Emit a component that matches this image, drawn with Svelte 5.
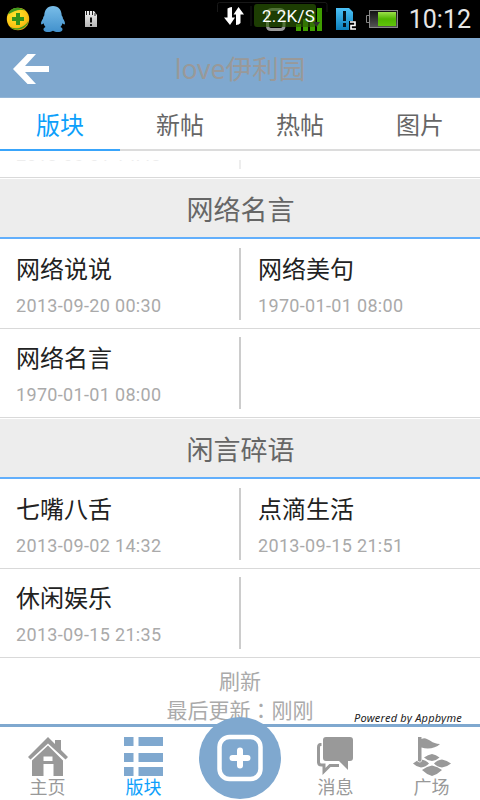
<script>
    const tabs = ["版块", "新帖", "热帖", "图片"];

    const sections = [
        {
            title: "网络名言",
            rows: [
                [
                    { name: "网络说说", date: "2013-09-20 00:30" },
                    { name: "网络美句", date: "1970-01-01 08:00" },
                ],
                [{ name: "网络名言", date: "1970-01-01 08:00" }],
            ],
        },
        {
            title: "闲言碎语",
            rows: [
                [
                    { name: "七嘴八舌", date: "2013-09-02 14:32" },
                    { name: "点滴生活", date: "2013-09-15 21:51" },
                ],
                [{ name: "休闲娱乐", date: "2013-09-15 21:35" }],
            ],
        },
    ];

    let active = $state(0);
</script>

<div class="screen">
    <div class="status">
        <svg class="status-icons" width="480" height="38" viewBox="0 0 480 38">
            <defs>
                <radialGradient id="ball" cx=".4" cy=".35" r=".75">
                    <stop offset="0" stop-color="#ffe62e" />
                    <stop offset=".65" stop-color="#fbc414" />
                    <stop offset="1" stop-color="#e79a09" />
                </radialGradient>
                <linearGradient id="qq" x2="0" y2="1">
                    <stop offset="0" stop-color="#79bde8" />
                    <stop offset="1" stop-color="#4291cc" />
                </linearGradient>
                <linearGradient id="card" x2="0" y2="1">
                    <stop offset="0" stop-color="#f2f2f2" />
                    <stop offset="1" stop-color="#b5b5b5" />
                </linearGradient>
                <linearGradient id="sim" x2="0" y2="1">
                    <stop offset="0" stop-color="#4cc2f8" />
                    <stop offset="1" stop-color="#0c80bc" />
                </linearGradient>
                <linearGradient id="charge" x2="0" y2="1">
                    <stop offset="0" stop-color="#9be04a" />
                    <stop offset=".5" stop-color="#4fb500" />
                    <stop offset="1" stop-color="#60c40a" />
                </linearGradient>
                <linearGradient id="empty" x2="0" y2="1">
                    <stop offset="0" stop-color="#111" />
                    <stop offset="1" stop-color="#555" />
                </linearGradient>
            </defs>

            <circle cx="18" cy="19" r="11.2" fill="url(#ball)" />
            <path d="M8 14.500C10 8 18 5 25 10.500c-7-2-11 1-17 4zM10 27c6 3 14 1 18.500-6-1 7-12 12-18.500 6z" fill="#3f9a1f" />
            <path d="M16 13h4v4h4v4h-4v4h-4v-4h-4v-4h4z" fill="#36931a" />

            <path d="M53 6c-5.600 0-8.600 4-8.700 9.500-.8 1-1.300 2-1.200 3-1.500 2-2.300 4-2 5.500.2.800 1.500.5 2.400-.7.300 1.500 1 2.700 2 3.700-2 .8-2.400 2.100-1.700 3.500 1.500 2 6.700 2 9.200.3 2.500 1.700 7.700 1.700 9.200-.3.700-1.400.3-2.700-1.700-3.500 1-1 1.700-2.200 2-3.700.9 1.200 2.200 1.500 2.400.7.300-1.500-.5-3.500-2-5.500.1-1-.4-2-1.200-3C61.600 10 58.600 6 53 6z" fill="url(#qq)" />

            <path d="M85 11h9l3 4v12H85z" fill="url(#card)" />
            <path d="M86.500 11v4M89.500 11v4M92.500 11v4M95 13v3" stroke="#222" stroke-width="1" />
            <path d="M90 17.500h2v5h-2zM90 24h2v2h-2z" fill="#111" />

            <path d="M217.500 12V4.500q0-2 2-2H325q2 0 2 2V12M251 6v20" fill="none" stroke="#181818" />
            <path d="M227.500 8.500q2-1.500 4.500-1.500v10.500h3l-5 7.500-6-7.500h3.500zM236 25V14.500h-2.500L238.500 7l5.500 7.500h-3.500V23q-1.500 2-4.500 2z" fill="#fff" />

            <path d="M267.500 19v-5q0-4.500 4.500-4.500h8q4 0 4 4.500M267.500 20v6q0 3.500 3.500 3.500h9.500q3.500 0 3.500-3.500v-6" fill="none" stroke="#999" stroke-width="3" />
            <path d="M296 24h5v7h-5zM303 19h5v12h-5zM310 14h5v17h-5zM317 8h5v23h-5z" fill="#3f9d00" />
            <rect x="254" y="4" width="62" height="23" rx="3" fill="#2c5d04" fill-opacity=".65" />
            <path d="M313 22h7l-3.500 5z" fill="#303030" />

            <path d="M336 8h13l4 4v9h-4v9h-13z" fill="url(#sim)" />
            <path d="M343 11h3v10h-3zM343 23h3v4h-3z" fill="#06131b" />
            <path d="M350 22h5v3.500h-4v3.500h5" fill="none" stroke="#fff" stroke-width="1.600" />

            <path d="M369 15.500h-2.500v7h2.500" fill="none" stroke="#858585" />
            <rect x="369.500" y="10.500" width="28" height="17" fill="url(#empty)" stroke="#888" />
            <rect x="378" y="12" width="18" height="14" fill="url(#charge)" />
        </svg>
        <span class="speed">2.2K/S</span>
        <span class="clock">10:12</span>
    </div>

    <header>
        <svg class="back" width="36" height="30" viewBox="0 0 36 30">
            <path d="M0 15 14.500 0H23L12 12H36v6H12L23 30H14.500z" fill="#fff" />
        </svg>
        <h1>love伊利园</h1>
    </header>

    <nav class="tabs">
        {#each tabs as tab, i}
            <button class="tab" class:active={active === i} onclick={() => (active = i)}>{tab}</button>
        {/each}
    </nav>

    <main>
        <!-- last row of the section above, scrolled nearly out of view -->
        <div class="scrolled">
            <div class="row">
                <div class="cell"><span class="date">2013-06-01 14:43</span></div>
                <div class="cell"></div>
            </div>
        </div>

        {#each sections as section}
            <h2>{section.title}</h2>
            {#each section.rows as row}
                <div class="row">
                    {#each [0, 1] as i}
                        <div class="cell">
                            {#if row[i]}
                                <span class="name">{row[i].name}</span>
                                <span class="date">{row[i].date}</span>
                            {/if}
                        </div>
                    {/each}
                </div>
            {/each}
        {/each}

        <div class="refresh">
            <span>刷新</span>
            <span class="updated">最后更新：刚刚</span>
        </div>
        <span class="powered">Powered by Appbyme</span>
    </main>

    <footer>
        <div class="item">
            <svg width="40" height="40" viewBox="0 0 40 40" fill="#999">
                <path d="M0 20 20 0l7 7V3h6v10l7 7-2.500 2.500L20 6.500 2.500 22.500z" />
                <path d="M4 23.500 20 8.500 35 23.500V39h-9.500V27h-10v12H4z" />
                <path d="M15.500 19.500h9v4.500h-9z" fill="#fff" />
            </svg>
            <span>主页</span>
        </div>
        <div class="item current">
            <svg width="40" height="40" viewBox="0 0 40 40" fill="#7fa8cf">
                <path d="M0 0h9.500v9H0zM14.500 0H39v9H14.500zM0 16h9.500v9H0zM14.500 16H39v9H14.500zM0 30h9.500v9H0zM14.500 30H39v9H14.500z" />
            </svg>
            <span>版块</span>
        </div>
        <div class="item add">
            <svg width="82" height="82" viewBox="0 0 82 82">
                <circle cx="41" cy="41" r="41" fill="#7fa8cf" />
                <rect x="20.500" y="20" width="41" height="42" rx="10" fill="none" stroke="#fff" stroke-width="4.500" />
                <path d="M41 33.500v15M33.500 41h15" stroke="#fff" stroke-width="6" stroke-linecap="round" />
            </svg>
        </div>
        <div class="item">
            <svg width="40" height="40" viewBox="0 0 40 40" fill="#999">
                <path d="M10 0h24q3 0 3 3v18q0 3-3 3h-2v9l-9-9H10q-3 0-3-3V3q0-3 3-3z" />
                <path d="M5.500 7.500h-1q-2 0-2 3V25q0 3 3 3H8v6.500l6-6h9" fill="none" stroke="#999" stroke-width="3" />
            </svg>
            <span>消息</span>
        </div>
        <div class="item">
            <svg width="40" height="40" viewBox="0 0 40 40" fill="#999">
                <path d="M12 20.500Q16 17.500 20 17q4 .5 7.500 3.500-3 3-7.500 3.500-5-.5-8-3.500zM1 26.500Q5 23 9 22.500q5 .5 8 4-3 3.500-8 4-4.500-.5-8-4zM22 26.500q3-3.500 8-4 5 1 9 4-4 3.500-9 4-5-.5-8-4zM10 33q5-4 10-4.500 6 1 10 4.500-4 4-10 6-6-2-10-6z" />
                <path d="M6 0h3.500v2c6-3 9 5 18.500 5-4 4-12 6-18.500 3.500V23q-.5 3-3.500 1z" stroke="#fff" stroke-width="1.200" paint-order="stroke" />
            </svg>
            <span>广场</span>
        </div>
    </footer>
</div>

<style>
    :global(body) {
        background: #fff;
    }

    .screen {
        width: 480px;
        height: 800px;
        display: flex;
        flex-flow: column nowrap;
        overflow: hidden;
        font-family: Roboto, "Noto Sans CJK SC", sans-serif;
    }

    .status {
        position: relative;
        height: 38px;
        flex: none;
        background: #000;
        color: #fff;
    }

    .status-icons {
        display: block;
    }

    .speed {
        position: absolute;
        left: 262px;
        top: 5px;
        font-size: 17px;
        line-height: 22px;
        letter-spacing: 0.3px;
    }

    .clock {
        position: absolute;
        right: 9px;
        top: 5px;
        font-size: 25px;
        line-height: 30px;
        color: #e6e6e6;
    }

    header {
        position: relative;
        height: 60px;
        flex: none;
        box-sizing: border-box;
        border-bottom: 1px solid #93b5d6;
        background: #7fa8cf;
    }

    .back {
        position: absolute;
        left: 13px;
        top: 16px;
    }

    h1 {
        margin: 0;
        font-family: "Noto Sans", "Noto Sans CJK SC", sans-serif;
        font-size: 26.6px;
        font-weight: 400;
        line-height: 62px;
        text-align: center;
        color: #999;
    }

    .tabs {
        display: flex;
        height: 53px;
        flex: none;
    }

    .tab {
        flex: 1;
        padding: 0;
        border: 0;
        border-bottom: 2px solid #dcdcdc;
        background: #fff;
        font: inherit;
        font-size: 24px;
        color: #666;
    }

    .tab.active {
        border-color: #39a5fb;
        color: #0d9ffb;
    }

    main {
        position: relative;
        flex: 1;
        min-height: 0;
    }

    .scrolled {
        display: flex;
        align-items: flex-end;
        height: 18px;
        margin-top: 9px;
        overflow: hidden;
    }

    .scrolled .row {
        width: 100%;
        flex: none;
    }

    .scrolled .date {
        margin-top: 42px;
        opacity: 0.2;
    }

    .scrolled .cell::after {
        opacity: 0.35;
    }

    h2 {
        height: 58px;
        margin: 1px 0 0;
        border-bottom: 2px solid #62affc;
        background: #ededed;
        font-size: 27px;
        font-weight: 400;
        line-height: 64px;
        text-align: center;
        text-indent: 1px;
        color: #666;
    }

    .row {
        display: grid;
        grid-template-columns: 241px 239px;
        height: 89px;
        border-bottom: 1px solid #d9d9d9;
        box-sizing: border-box;
    }

    h2 + .row {
        height: 90px;
    }

    .cell {
        position: relative;
        display: flex;
        flex-flow: column nowrap;
        padding: 14px 0 0 16px;
    }

    .cell + .cell {
        padding-left: 17px;
    }

    h2 + .row .cell {
        padding-top: 15px;
    }

    .cell:first-child::after {
        content: "";
        position: absolute;
        right: 0;
        bottom: 8px;
        width: 2px;
        height: 72px;
        background: #ccc;
    }

    .name {
        font-size: 24px;
        line-height: 32px;
        color: #222;
    }

    .date {
        margin-top: 10px;
        font-size: 18px;
        line-height: 20px;
        letter-spacing: 0.33px;
        color: #aaa;
    }

    .refresh {
        display: flex;
        flex-flow: column nowrap;
        align-items: center;
        padding-top: 10px;
        font-size: 21px;
        line-height: 29px;
        color: #aaa;
    }

    /* the TC face centres the full-width colon */
    .updated {
        font-family: Roboto, "Noto Sans CJK TC", sans-serif;
    }

    .powered {
        position: absolute;
        right: 18px;
        bottom: -2px;
        font-family: "Noto Sans", sans-serif;
        font-size: 11px;
        font-style: italic;
        line-height: 16px;
        letter-spacing: 0.22px;
        color: #222;
    }

    footer {
        position: relative;
        display: grid;
        grid-template-columns: repeat(5, 96px);
        height: 76px;
        flex: none;
        box-sizing: border-box;
        border-top: 3px solid #7fa8cf;
        background: #fff;
    }

    .item {
        display: flex;
        flex-flow: column nowrap;
        align-items: center;
        padding-top: 10px;
        font-size: 18px;
        line-height: 22px;
        color: #999;
    }

    .item:not(.add) {
        padding-right: 1px;
    }

    .current {
        color: #0d9ffb;
    }

    .add {
        margin-top: -20px;
    }
</style>
